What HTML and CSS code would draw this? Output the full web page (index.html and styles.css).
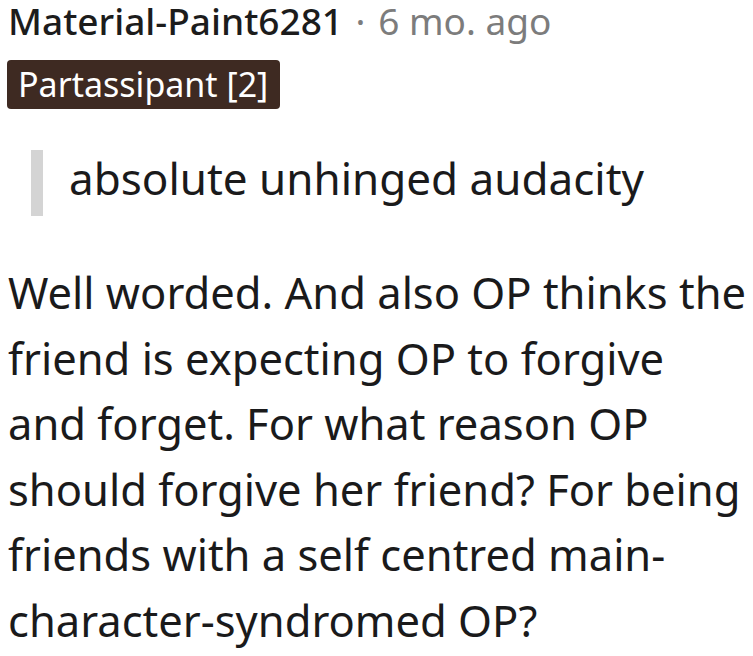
FILE: index.html
```html
<!DOCTYPE html>
<html>
<head>
<meta charset="utf-8">
<link rel="stylesheet" href="styles.css">
</head>
<body>
<div class="comment">
  <div class="meta"><span class="author">Material-Paint6281</span><span class="sep"> · </span><span class="time">6 mo. ago</span></div>
  <div class="flair-row"><span class="flair">Partassipant [2]</span></div>
  <blockquote class="quote"><p>absolute unhinged audacity</p></blockquote>
  <p class="body">Well worded. And also OP thinks the friend is expecting OP to forgive and forget. For what reason OP should forgive her friend? For being friends with a self centred main-character-syndromed OP?</p>
</div>
</body>
</html>
```
FILE: styles.css
```css
html, body { margin: 0; padding: 0; background: #fff; }
.comment { padding: 0 0 0 8px; font-family: "Noto Sans", sans-serif; color: #1a1a1b; }
.meta { font-size: 37px; line-height: 42px; white-space: nowrap; }
.author { color: #1c1c1c; font-weight: 500; }
.sep { color: #7c7c7c; margin: 0 3px; }
.time { color: #7c7c7c; }
.flair-row { margin-top: 18px; height: 49px; }
.flair { display: inline-block; background: #3e2a22; color: #fff; font-size: 34px; line-height: 49px; padding: 0 12px 0 11px; border-radius: 4px; margin-left: -1px; }
.quote { margin: 41px 0 0 23px; border-left: 12px solid #d4d4d4; padding: 0 0 10px 26px; }
.quote p { margin: 0; font-size: 44px; line-height: 56px; }
.body { margin: 44px 0 0 0; font-size: 43.5px; line-height: 65.6px; }
```
